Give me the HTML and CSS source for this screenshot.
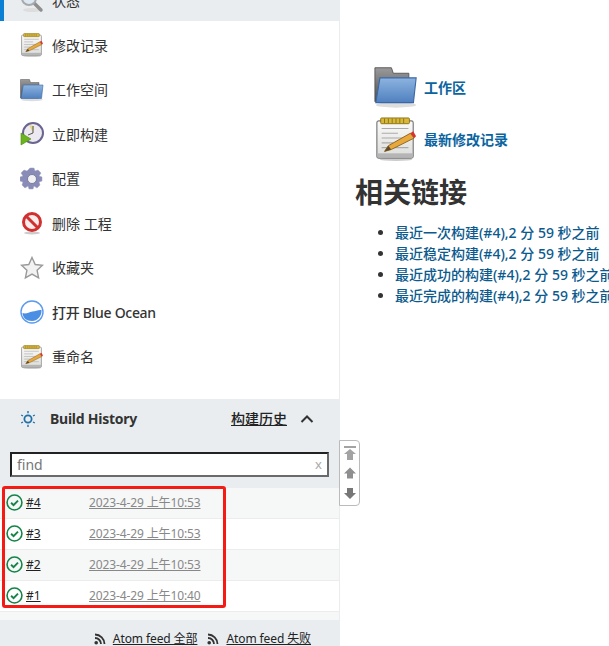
FILE: index.html
```html
<!DOCTYPE html>
<html lang="en">
<head>
<meta charset="utf-8">
<title>Jenkins 工程</title>
<link rel="stylesheet" href="styles.css">
</head>
<body>
<svg class="defs" width="0" height="0" aria-hidden="true">
  <defs>
    <linearGradient id="folderBlue" x1="0" y1="0" x2="0" y2="1">
      <stop offset="0" stop-color="#8db4e0"/><stop offset="1" stop-color="#4f80bf"/>
    </linearGradient>
    <linearGradient id="folderGrey" x1="0" y1="0" x2="0" y2="1">
      <stop offset="0" stop-color="#9a9a9a"/><stop offset="1" stop-color="#4d4d4d"/>
    </linearGradient>
    <linearGradient id="paper" x1="0" y1="0" x2="0" y2="1">
      <stop offset="0" stop-color="#fafafa"/><stop offset="1" stop-color="#dcdcda"/>
    </linearGradient>
    <symbol id="i-notepad" viewBox="3 1 42 46">
      <ellipse cx="24" cy="45.500" rx="17" ry="1.500" fill="#ccc"/>
      <rect x="4" y="5" width="38" height="39" rx="2" fill="url(#paper)" stroke="#777" stroke-width="1.200"/>
      <rect x="4.600" y="39" width="36.800" height="4.500" fill="#b5b5b5"/>
      <rect x="8" y="2" width="30" height="6" rx="1" fill="#d8b73c" stroke="#8a7413"/>
      <path d="M12 2.500v5M16 2.500v5M20 2.500v5M24 2.500v5M28 2.500v5M32 2.500v5" stroke="#8a7413"/>
      <path d="M9 13h28M9 18h17M9 23h28M9 28h12M9 33h28" stroke="#aaa" stroke-width="1.200"/>
      <path d="M12 37l4-6 23-13 4 5-24 12z" fill="#e9a83c" stroke="#8c6420"/>
      <path d="M12 37l4-6 3 4z" fill="#5d4a2b"/>
      <path d="M39 18l4 5 2-2-3-5z" fill="#d9332c"/>
    </symbol>
    <symbol id="i-folder" viewBox="0 0 48 48">
      <ellipse cx="24" cy="43.500" rx="22" ry="3" fill="#ddd"/>
      <path d="M1 3h18l2 6h17v31H1z" fill="url(#folderGrey)" stroke="#555"/>
      <path d="M6.500 14H46L43 41H2z" fill="url(#folderBlue)" stroke="#3a68a6" stroke-width="1.200"/>
    </symbol>
  </defs>
</svg>

<div class="page">
  <aside class="side">
    <ul class="tasks">
      <li class="task task-on">
        <svg class="ico" viewBox="0 0 24 24">
          <ellipse cx="12" cy="21" rx="9" ry="2" fill="#ddd"/>
          <path d="M14 14l7 7" stroke="#8f8f8f" stroke-width="3.500" stroke-linecap="round"/>
          <circle cx="9" cy="9" r="7" fill="#dce9f5" stroke="#a9a9a9" stroke-width="2"/>
        </svg>
        <span>状态</span>
      </li>
      <li class="task"><svg class="ico"><use href="#i-notepad"/></svg><span>修改记录</span></li>
      <li class="task"><svg class="ico"><use href="#i-folder"/></svg><span>工作空间</span></li>
      <li class="task">
        <svg class="ico" viewBox="0 0 24 24">
          <circle cx="13" cy="11" r="10" fill="#eceaf0" stroke="#6a6590" stroke-width="2"/>
          <path d="M9 3l5 1-1 7z" fill="#e6d68a"/>
          <path d="M13 4v7l-5 2" fill="none" stroke="#555" stroke-width="1"/>
          <path d="M1 11l10 6-10 6z" fill="#6cb41e" stroke="#4d8a10" stroke-width=".6"/>
        </svg>
        <span>立即构建</span>
      </li>
      <li class="task">
        <svg class="ico" viewBox="0 0 24 24">
          <path d="M10 1h4l1 3 3-1 3 3-2 3 3 1v4l-3 1 1 3-3 3-3-2-1 3h-4l-1-3-3 2-3-3 1-3-3-1v-4l3-1-2-3 3-3 3 1z" fill="#8a8cb8" stroke="#9ea0c4" stroke-width=".5"/>
          <circle cx="12" cy="12" r="4.500" fill="#f2f2f2" stroke="#6a6c94" stroke-width=".8"/>
        </svg>
        <span>配置</span>
      </li>
      <li class="task">
        <svg class="ico" viewBox="0 0 24 24">
          <ellipse cx="12" cy="22" rx="8" ry="1.500" fill="#ccc"/>
          <circle cx="12" cy="11" r="8.500" fill="#fbecec" stroke="#d13030" stroke-width="3"/>
          <path d="M6 5l12 12" stroke="#d13030" stroke-width="3"/>
        </svg>
        <span>删除 工程</span>
      </li>
      <li class="task">
        <svg class="ico" viewBox="0 0 24 24">
          <path d="M12 1.500l3.200 7 7.300.8-5.400 5 1.500 7.500L12 18.100 5.400 21.800l1.500-7.500-5.400-5 7.300-.8z" fill="#f2f2f2" stroke="#999" stroke-width="1.400"/>
        </svg>
        <span>收藏夹</span>
      </li>
      <li class="task">
        <svg class="ico" viewBox="0 0 24 24">
          <circle cx="12" cy="12" r="11" fill="#fff" stroke="#5b9aec" stroke-width="1.400"/>
          <path d="M2.500 13c4 1.500 6-1 10-1.500 3-.5 6-2 9-1.500 .5 6-4 11-9.500 11S2.800 18 2.500 13z" fill="#4a8fe3"/>
        </svg>
        <span class="task-latin">打开 Blue Ocean</span>
      </li>
      <li class="task"><svg class="ico"><use href="#i-notepad"/></svg><span>重命名</span></li>
    </ul>

    <section class="history">
      <div class="history-head">
        <svg class="sun" viewBox="0 0 16 16">
          <circle cx="8" cy="8" r="3.600" fill="none" stroke="#1f6fa8" stroke-width="1.800"/>
          <path d="M8 0v2.200M8 13.800V16M1.200 4l1.800 1M13 11l1.800 1M1.200 12l1.800-1M13 5l1.800-1" stroke="#1f6fa8" stroke-width="1.400"/>
        </svg>
        <span class="history-title">Build History</span>
        <a class="history-trend">构建历史</a>
        <svg class="chev" viewBox="0 0 14 10"><path d="M1.500 8L7 2.500 12.500 8" fill="none" stroke="#333" stroke-width="2"/></svg>
      </div>
      <div class="find"><span>find</span><span class="find-x">x</span></div>
      <div class="builds">
        <div class="build">
          <svg class="ok" viewBox="0 0 16 16"><circle cx="8" cy="8" r="7" fill="none" stroke="#138347" stroke-width="1.500"/><path d="M4.800 8.200l2.300 2.300 4.200-4.300" fill="none" stroke="#138347" stroke-width="1.800"/></svg>
          <a class="build-no">#4</a><a class="build-time">2023-4-29 上午10:53</a>
        </div>
        <div class="build">
          <svg class="ok" viewBox="0 0 16 16"><circle cx="8" cy="8" r="7" fill="none" stroke="#138347" stroke-width="1.500"/><path d="M4.800 8.200l2.300 2.300 4.200-4.300" fill="none" stroke="#138347" stroke-width="1.800"/></svg>
          <a class="build-no">#3</a><a class="build-time">2023-4-29 上午10:53</a>
        </div>
        <div class="build">
          <svg class="ok" viewBox="0 0 16 16"><circle cx="8" cy="8" r="7" fill="none" stroke="#138347" stroke-width="1.500"/><path d="M4.800 8.200l2.300 2.300 4.200-4.300" fill="none" stroke="#138347" stroke-width="1.800"/></svg>
          <a class="build-no">#2</a><a class="build-time">2023-4-29 上午10:53</a>
        </div>
        <div class="build">
          <svg class="ok" viewBox="0 0 16 16"><circle cx="8" cy="8" r="7" fill="none" stroke="#138347" stroke-width="1.500"/><path d="M4.800 8.200l2.300 2.300 4.200-4.300" fill="none" stroke="#138347" stroke-width="1.800"/></svg>
          <a class="build-no">#1</a><a class="build-time">2023-4-29 上午10:40</a>
        </div>
        <div class="builds-end"></div>
      </div>
      <div class="feeds">
        <svg class="rss" viewBox="0 0 12 12"><circle cx="2.200" cy="9.800" r="1.800" fill="#333"/><path d="M1 5a6 6 0 0 1 6 6M1 1.500a9.500 9.500 0 0 1 9.500 9.500" fill="none" stroke="#333" stroke-width="1.800"/></svg>
        <a>Atom feed 全部</a>
        <svg class="rss" viewBox="0 0 12 12"><circle cx="2.200" cy="9.800" r="1.800" fill="#333"/><path d="M1 5a6 6 0 0 1 6 6M1 1.500a9.500 9.500 0 0 1 9.500 9.500" fill="none" stroke="#333" stroke-width="1.800"/></svg>
        <a>Atom feed 失败</a>
      </div>
    </section>

    <div class="red-box"></div>
    <div class="pager">
      <svg viewBox="0 0 12 14"><path d="M0 0h12v2H0zM6 3l6 5H9v6H3V8H0z" fill="#a3a3a3"/></svg>
      <svg viewBox="0 0 12 14"><path d="M6 1.500l6 6H9v5H3v-5H0z" fill="#8f8f8f"/></svg>
      <svg viewBox="0 0 12 14"><path d="M3 2h6v5h3l-6 6-6-6h3z" fill="#777"/></svg>
    </div>
  </aside>

  <main class="main">
    <div class="perma">
      <a class="perma-row perma-first"><svg class="big"><use href="#i-folder"/></svg>工作区</a>
      <a class="perma-row"><svg class="big"><use href="#i-notepad"/></svg>最新修改记录</a>
    </div>
    <h2 class="links-title">相关链接</h2>
    <ul class="links">
      <li><a>最近一次构建(#4),2 分 59 秒之前</a></li>
      <li><a>最近稳定构建(#4),2 分 59 秒之前</a></li>
      <li><a>最近成功的构建(#4),2 分 59 秒之前</a></li>
      <li><a>最近完成的构建(#4),2 分 59 秒之前</a></li>
    </ul>
  </main>
</div>
</body>
</html>
```

FILE: styles.css
```css
*{box-sizing:border-box}
html,body{margin:0;height:646px;overflow:hidden}
body{background:#fff;color:#333;font:14px/21px "Noto Sans","Noto Sans CJK SC",sans-serif}
.defs{position:absolute}
.page{display:flex;align-items:flex-start}

/* left column */
.side{position:relative;width:340px;flex:none;height:646px;border-right:1px solid #e9edf0;overflow:visible}
.tasks{list-style:none;margin:-19.400px 0 0;padding:0}
.task{display:flex;align-items:center;gap:8px;height:40px;margin-bottom:4.500px;padding-left:20px;color:#333}
.task-on{background:#e9edf0;border-left:4px solid #0b7fd4;padding-left:16px}
.task-latin{font-weight:500;letter-spacing:-.3px}
.ico{width:24px;height:24px;flex:none}

/* build history */
.history{position:absolute;top:399px;left:0;right:0;bottom:0;background:#e9edf0}
.history-head{display:flex;align-items:center;height:39px;padding:0 25px 0 20px}
.sun{width:16px;height:16px;flex:none}
.history-title{margin-left:14px;font-weight:700;flex:1;letter-spacing:-.25px}
.history-trend{color:#222;text-decoration:underline;font-weight:500}
.chev{width:14px;height:10px;margin-left:13px}
.find{display:flex;justify-content:space-between;align-items:center;height:25px;margin:14px 10px 11px;padding:0 5px;background:#fff;border:2px solid #6a6a6a;border-top-color:#222;border-left-color:#222;color:#777}
.find-x{font-size:13px;color:#aaa}
.builds{background:#f6f7f7}
.build{display:flex;align-items:center;height:31px;padding:0 0 2px 6px;border-bottom:1px solid #ececec;font-size:12px;background:#f6f7f7}
.build:nth-child(even){background:#fff}
.ok{width:17px;height:17px;flex:none;margin-top:1px}
.build-no{width:63px;margin-left:3px;color:#222;text-decoration:underline}
.build-time{color:#888;text-decoration:underline;letter-spacing:-.12px}
.builds-end{height:8px}
.feeds{display:flex;align-items:center;justify-content:flex-end;gap:7px;padding:8px 28px 0 0;font-size:12px}
.feeds a{color:#222;text-decoration:underline;letter-spacing:-.1px}
.feeds a:first-of-type{margin-right:3px}
.rss{width:12px;height:12px}

/* overlays */
.red-box{position:absolute;left:2px;top:486px;width:224px;height:122px;border:3px solid #f51a14;border-radius:3px}
.pager{position:absolute;left:339px;top:440px;width:21px;height:66px;display:flex;flex-direction:column;align-items:center;justify-content:center;gap:6px;background:#fff;border:1px solid #bbb;border-radius:0 4px 4px 0}
.pager svg{width:12px;height:14px}

/* right column */
.main{flex:1;min-width:0;padding:63px 0 0 15px;white-space:nowrap}
.perma-row{display:flex;align-items:center;gap:6px;height:48px;padding-left:19px;color:#0b64a0;font-weight:700}
.perma-first{margin-bottom:4px}
.big{width:44px;height:44px;flex:none}
.links-title{margin:9px 0 0;font-size:28px;line-height:40px;font-weight:700;color:#333}
.links{margin:10px 0 0;padding:0 0 0 40px}
.links a{color:#0b5a8e;font-weight:500}
```
